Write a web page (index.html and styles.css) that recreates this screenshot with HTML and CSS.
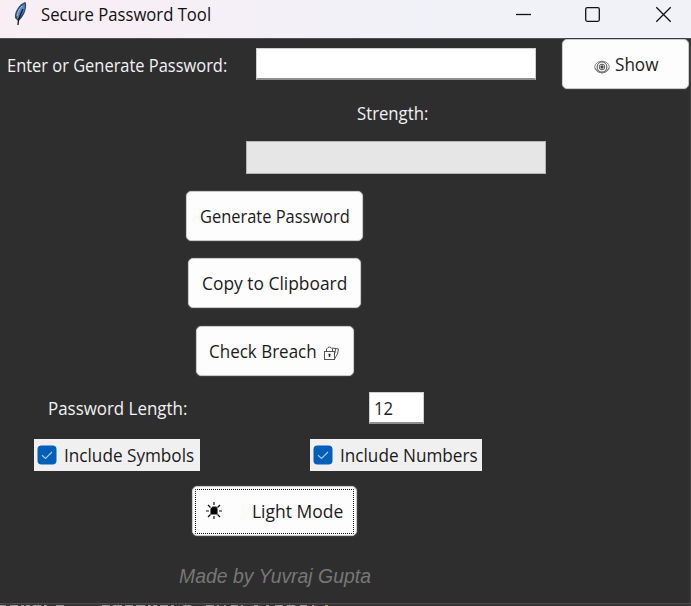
FILE: index.html
```
<!DOCTYPE html>
<html lang="en">
<head>
<meta charset="utf-8">
<title>Secure Password Tool</title>
<link rel="stylesheet" href="styles.css">
</head>
<body>
<header class="titlebar">
  <svg class="feather" width="16" height="26" viewBox="0 0 16 26">
    <path d="M12 1C7 3 1 10 2 17L5 20C10 17 14 9 13 2Z" fill="#34475b"/>
    <path d="M11.500 2.500C7 6 3 12 4 18C9 15 13 9 11.500 2.500Z" fill="#4c8fd6"/>
    <path d="M10 8C8 13 5 17 5 24" fill="none" stroke="#15191e" stroke-width="1.3"/>
    <path d="M9 5C6 8 4 12 4 15" fill="none" stroke="#a9c9e8" stroke-width="1"/>
  </svg>
  <span class="title">Secure Password Tool</span>
  <svg class="controls" width="160" height="20" viewBox="0 0 160 20" fill="none" stroke="#111" stroke-width="1.3">
    <path d="M1 9.500H16"/>
    <rect x="70.700" y="2.700" width="13.600" height="13.600" rx="1.500"/>
    <path d="M141.300 2.300L155.700 16.700M155.700 2.300L141.300 16.700"/>
  </svg>
</header>
<main class="window">
  <section class="entry-row">
    <label class="text prompt">Enter or Generate Password:</label>
    <div class="field password"></div>
    <div class="button show">
      <svg width="16" height="14" viewBox="0 0 16 14" fill="none" stroke="#555" stroke-width="1">
        <ellipse cx="8" cy="7" rx="7.300" ry="5.800" stroke="#888"/>
        <ellipse cx="8" cy="7" rx="4.900" ry="5.100"/>
        <circle cx="8" cy="7" r="2.800"/>
        <circle cx="8" cy="7" r="1.200" fill="#222"/>
        <path d="M1 8Q4 13 8 13T15 8" stroke="#777"/>
      </svg>
      <span class="text show-text">Show</span>
    </div>
  </section>
  <section class="strength">
    <div class="text strength-label">Strength:</div>
    <div class="meter"></div>
  </section>
  <section class="actions">
    <div class="button generate"><span class="text generate-text">Generate Password</span></div>
    <div class="button copy"><span class="text copy-text">Copy to Clipboard</span></div>
    <div class="button breach"><span class="text breach-text">Check Breach</span>
      <svg width="17" height="16" viewBox="0 0 17 16" fill="none" stroke="#555" stroke-width="1">
        <rect x="1.500" y="6.500" width="10" height="8"/>
        <path d="M3.500 6.500V4Q6.500 0 9.500 4V6.500M9 3L15.500 4L14.500 9L11.500 14M12.500 4L12 8"/>
        <path d="M6.500 9V12M5.500 9.500H7.500" stroke="#222" stroke-width="1.400"/>
      </svg>
    </div>
  </section>
  <section class="options">
    <div class="text length-label">Password Length:</div>
    <div class="field length"><span class="text">12</span></div>
    <div class="check symbols">
      <svg class="tick" width="20" height="20" viewBox="0 0 20 20"><rect x=".5" y=".5" width="19" height="19" rx="4" fill="#005fb8"/><path d="M5 10.300L8.500 13.500L15 7" fill="none" stroke="#a9caea" stroke-width="1.200"/></svg>
      <span class="text">Include Symbols</span>
    </div>
    <div class="check numbers">
      <svg class="tick" width="20" height="20" viewBox="0 0 20 20"><rect x=".5" y=".5" width="19" height="19" rx="4" fill="#005fb8"/><path d="M5 10.300L8.500 13.500L15 7" fill="none" stroke="#a9caea" stroke-width="1.200"/></svg>
      <span class="text">Include Numbers</span>
    </div>
  </section>
  <section class="footer">
    <div class="button mode">
      <svg class="focus" width="159" height="45"><rect x=".5" y=".5" width="158" height="44" fill="none" stroke="#111" stroke-dasharray="1 1" stroke-dashoffset=".5"/></svg>
      <svg width="16" height="18" viewBox="0 0 16 18" fill="none" stroke="#111" stroke-width="1.200">
        <path d="M5 12V7L7 5H10L11 7V12Z" fill="#000"/>
        <path d="M8 0V3M8 14V17M0 9H3M13 9H16M2 3L4.500 5.500M14 3L11.500 5.500M2 15L4.500 12.500M14 15L11.500 12.500"/>
      </svg>
      <span class="text mode-text">Light Mode</span>
    </div>
    <div class="credit">Made by Yuvraj Gupta</div>
  </section>
</main>
<svg class="behind" width="691" height="2" viewBox="0 0 691 2">
  <rect width="691" height="2" fill="#3a3637"/>
  <path d="M0 1.500H6M10 1.500H18M21 1.500H24M26 1.500H30M33 1.500H41M44 1.500H47M56 1.500H64M102 1.500H110M113 1.500H122M125 1.500H133M136 1.500H145M148 1.500H151M153 1.500H157M160 1.500H168M171 1.500H174M183 1.500H191M206 1.500H214M217 1.500H219M224 1.500H226M231 1.500H238M241 1.500H243M254 1.500H258M266 1.500H269M275 1.500H283M287 1.500H295M300 1.500H307" stroke="#999"/>
  <path d="M312 1.500H314M325 1.500H328" stroke="#b99a3e"/>
</svg>
</body>
</html>
```
FILE: styles.css
```
* { box-sizing: border-box; }
body {
  margin: 0;
  width: 691px;
  height: 606px;
  overflow: hidden;
  background: #2e2e2e;
  font-family: "Open Sans", "Noto Sans", sans-serif;
}
svg { display: block; flex: none; }
.titlebar {
  display: flex;
  height: 38px;
  padding-left: 13px;
  background: linear-gradient(90deg, #f9eef4, #f4f0f7 38%, #f0f2f8 65%);
}
.title {
  width: 462px;
  margin-left: 12px;
  font-size: 18px;
  line-height: 29px;
  color: #111;
  white-space: nowrap;
  transform: scaleX(.926);
  transform-origin: left;
}
.feather { margin-top: 1px; }
.controls { margin-top: 5px; margin-left: 12px; }
.window {
  height: 566px;
  border-top: 1px solid #505052;
  border-right: 1px solid #414141;
  border-bottom: 1px solid #4b4b4b;
}
.text {
  font-size: 19px;
  line-height: 26px;
  white-space: nowrap;
  transform: scaleX(.88);
  transform-origin: left;
}
.entry-row { display: flex; height: 52px; }
.prompt { width: 242px; margin-left: 7px; padding-top: 13px; color: #f2f2f2; transform: scaleX(.865); }
.field { background: #fff; border: 1px solid #cfcfcf; border-bottom: 2px solid #909090; color: #222; }
.password { width: 280px; height: 32px; margin: 9px 26px 0 7px; }
.button {
  display: flex;
  align-items: center;
  justify-content: center;
  height: 50px;
  background: #fdfdfd;
  border: 1px solid #c9c9c9;
  border-radius: 5px;
  box-shadow: 0 0 0 1px #3b3b3b;
  color: #1b1b1b;
}
.show { width: 127px; gap: 5px; }
.show-text { width: 42px; transform: scaleX(.9); }
.show svg { margin-top: 6px; }
.strength { display: flex; flex-direction: column; align-items: center; width: 320px; margin-left: 236px; }
.strength-label { width: 71px; margin: 9px 8px 15px 0; color: #f2f2f2; }
.meter { width: 300px; height: 33px; background: #e6e6e6; border: 1px solid #b5b5b5; }
.actions { display: flex; flex-direction: column; align-items: center; width: 549px; gap: 17.400px; padding-top: 17px; }
.generate { width: 177px; }
.generate-text { width: 150px; transform: scaleX(.865); }
.copy { width: 173px; }
.copy-text { width: 145px; transform: scaleX(.915); }
.breach { width: 158px; gap: 6px; }
.breach-text { width: 108px; transform: scaleX(.895); }
.breach svg { margin-top: 5px; }
.options {
  display: grid;
  grid-template-columns: 235px 322px;
  grid-template-rows: 32px 32px;
  row-gap: 15px;
  justify-items: center;
  padding-top: 16.200px;
}
.length-label { width: 140px; line-height: 33px; color: #f2f2f2; transform: scaleX(.89); }
.length { width: 55px; height: 32px; padding-left: 4px; }
.length .text { display: block; line-height: 31px; }
.check { display: flex; align-items: center; padding-left: 3px; gap: 7px; background: #f0f0f0; color: #1b1b1b; }
.check .text { transform: scaleX(.903); }
.symbols { width: 166px; margin-right: 2px; }
.numbers { width: 172px; }
.footer { display: flex; flex-direction: column; align-items: center; width: 549px; padding-top: 15px; }
.mode { position: relative; width: 165px; gap: 30px; }
.mode-text { width: 91px; transform: scaleX(.92); }
.focus { position: absolute; left: 2px; top: 2px; }
.credit {
  margin-top: 28px;
  font: italic 20px/24px "Liberation Sans", sans-serif;
  color: #777;
  white-space: nowrap;
  transform: scaleX(.97);
}
```
